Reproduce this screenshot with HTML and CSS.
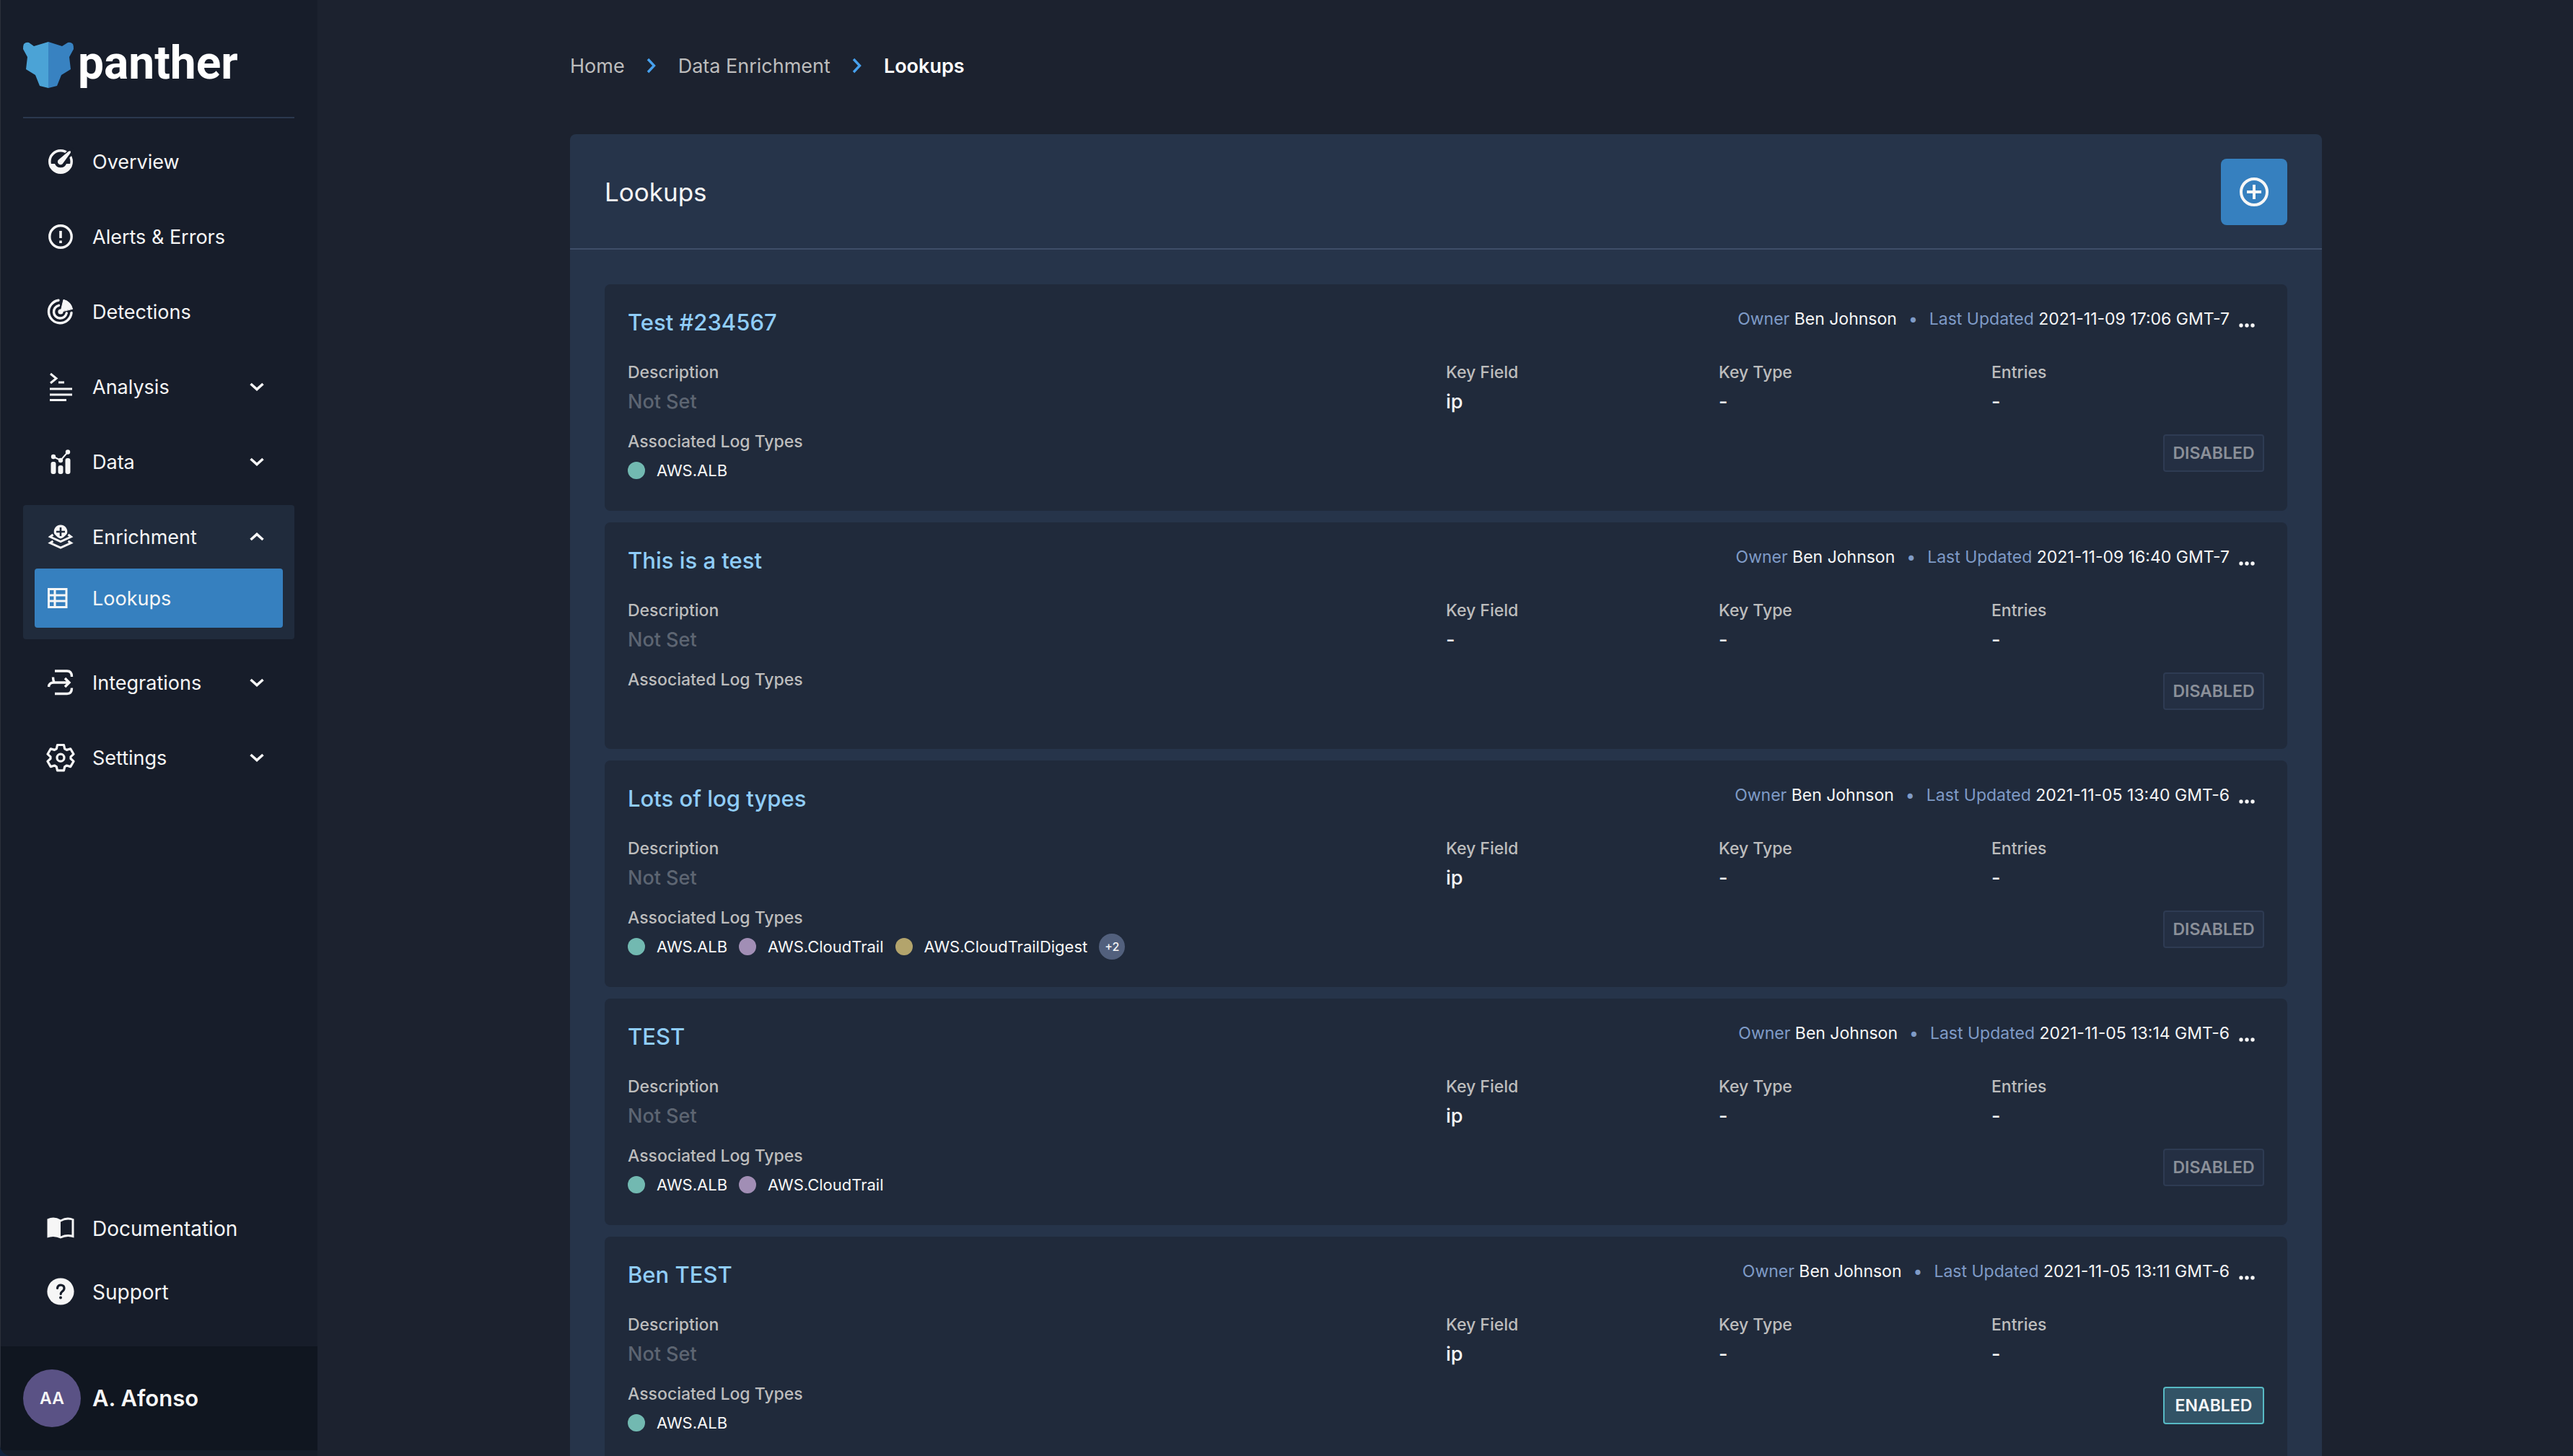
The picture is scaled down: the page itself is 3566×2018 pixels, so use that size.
FILE: index.html
```html
<!DOCTYPE html>
<html lang="en">
<head>
<meta charset="utf-8">
<title>Lookups - Panther</title>
<meta name="viewport" content="width=device-width, initial-scale=1">
<link rel="stylesheet" href="styles.css">
</head>
<body>
<svg class="defs" aria-hidden="true">
  <symbol id="chevron" viewBox="0 0 24 24"><path d="M3.5 8l8.500 7.500L20.500 8" fill="none" stroke="currentColor" stroke-width="3.600"/></symbol>
  <symbol id="crumb" viewBox="0 0 14 22"><path d="M2 2l8.500 9L2 20" fill="none" stroke="currentColor" stroke-width="3.400"/></symbol>
  <symbol id="more" viewBox="0 0 24 8"><circle cx="4" cy="4" r="2.700"/><circle cx="12" cy="4" r="2.700"/><circle cx="20" cy="4" r="2.700"/></symbol>
</svg>
<div class="app">
  <aside class="sidebar">
    <a class="logo" href="#">
      <svg class="logo-mark" viewBox="0 0 70 64" aria-hidden="true">
        <path fill="#4ba3d6" d="M35 0L15 6 8 1Q4 0 1 3 0 5 0 10L6 21 4 38 17 46 23 61 35 64z"/>
        <path fill="#3882c1" d="M35 0L54 6 62 1Q66 0 69 3 70 5 70 10L64 21 66 38 53 46 47 61 35 64z"/>
      </svg>
      <span class="logo-word">panther</span>
    </a>
    <nav class="nav" aria-label="Main">
      <a class="item" href="#">
        <svg class="icon" viewBox="0 0 40 40"><circle cx="20" cy="20" r="15.200" fill="none" stroke="currentColor" stroke-width="3.500"/><path d="M4 23h8a8.500 8 0 0 0 16 0h8A16.500 16.500 0 0 1 4 23z" fill="currentColor"/><path d="M20 20L38 3" stroke="#171d2a" stroke-width="9"/><path d="M17.600 17L31 5.800Q35 4 33.700 8L23.500 22A4 4 0 1 1 17.600 17z" fill="currentColor"/></svg>
        <span>Overview</span>
      </a>
      <a class="item" href="#">
        <svg class="icon" viewBox="0 0 40 40"><circle cx="20" cy="20" r="15.200" fill="none" stroke="currentColor" stroke-width="3.400"/><path d="M20 12v10m0 3.500v3.500" stroke="currentColor" stroke-width="3.600"/></svg>
        <span>Alerts &amp; Errors</span>
      </a>
      <a class="item" href="#">
        <svg class="icon" viewBox="0 0 40 40" fill="none" stroke="currentColor" stroke-width="3.400" stroke-linecap="round"><path d="M17 4.300A15.800 15.800 0 1 0 35 21.500M17.500 11.300A9 9 0 1 0 28.300 22"/><circle cx="20" cy="20" r="3.600" fill="currentColor" stroke="none"/><path d="M20 20L24 3.300A17 17 0 0 1 36.500 16z" fill="currentColor" stroke-width="1"/></svg>
        <span>Detections</span>
      </a>
      <button class="item" type="button">
        <svg class="icon" viewBox="0 0 40 40" fill="none" stroke="currentColor" stroke-width="3"><path d="M6 2l8 6.500L6 15M17 14h8M5 23h31M5 31h31M5 38.500h23"/></svg>
        <span>Analysis</span>
        <svg class="chev"><use href="#chevron"/></svg>
      </button>
      <button class="item" type="button">
        <svg class="icon" viewBox="0 0 40 40" fill="currentColor"><rect x="6.500" y="20" width="7" height="17" rx="3"/><rect x="16.500" y="25" width="7" height="12" rx="3"/><rect x="26.500" y="15" width="7" height="22" rx="3"/><circle cx="10" cy="13" r="3.200"/><circle cx="20" cy="18" r="3.200"/><circle cx="30" cy="6.500" r="3.200"/><path d="M10 13l10 5L30 6.500" fill="none" stroke="currentColor" stroke-width="2"/></svg>
        <span>Data</span>
        <svg class="chev"><use href="#chevron"/></svg>
      </button>
      <div class="group">
        <button class="item" type="button" aria-expanded="true">
          <svg class="icon" viewBox="0 0 40 40"><g fill="none" stroke="currentColor" stroke-width="3"><path d="M9.500 17L5.500 20 20 26.500 34.500 20 30.500 17"/><path d="M9.500 26L5.500 28.500 20 35 34.500 28.500 30.500 26"/></g><path d="M11.300 16A9.300 9.300 0 1 1 28.700 16Q24 21.500 20 22.500 16 21.500 11.300 16z" fill="currentColor"/><path d="M20 7v12m-6-6h12" stroke="#202b3c" stroke-width="2.600"/></svg>
          <span>Enrichment</span>
          <svg class="chev up"><use href="#chevron"/></svg>
        </button>
        <a class="item sub" href="#" aria-current="page">
          <svg class="icon" viewBox="0 0 40 40" fill="none" stroke="currentColor" stroke-width="3"><path d="M7.500 7.500h24.500v25H7.500zM7.500 16h24.500M7.500 24h24.500M16 7.500v25"/></svg>
          <span>Lookups</span>
        </a>
      </div>
      <button class="item" type="button">
        <svg class="icon" viewBox="0 0 40 40" fill="none" stroke="currentColor" stroke-width="3.400"><path d="M12 4h17q6.500 0 6.500 8M12 35.500h17q6.500 0 6.500-8M3.500 26q.5-6 7-6h21M26 14l6 6-6 6M9.500 12.500q0 4 1.500 7"/></svg>
        <span>Integrations</span>
        <svg class="chev"><use href="#chevron"/></svg>
      </button>
      <button class="item" type="button">
        <svg class="icon" viewBox="0 0 40 40" fill="none" stroke="currentColor" stroke-width="3.200" stroke-linejoin="round"><path d="M15.500 2.500h9l1.200 5.300 2.800 1.600 5.200-1.600 4.300 7.400-4 3.700v2.600l4 3.700-4.300 7.400-5.200-1.600-2.800 1.600-1.200 5.300h-9l-1.200-5.300-2.800-1.600-5.200 1.600L2 25.200l4-3.700v-2.600l-4-3.700 4.300-7.400 5.200 1.600 2.800-1.600z"/><circle cx="20" cy="20.200" r="5"/></svg>
        <span>Settings</span>
        <svg class="chev"><use href="#chevron"/></svg>
      </button>
    </nav>
    <nav class="help" aria-label="Help">
      <a class="item" href="#">
        <svg class="icon" viewBox="0 0 40 40" fill="currentColor"><path d="M20 8.500Q11 3 1.500 7.500v26Q11 30 20 34.500 29 30 38.500 33.500v-26Q29 3 20 8.500zM20 11.500Q27 7 35.500 9v20.500Q27 28 20 31.500z" fill-rule="evenodd"/></svg>
        <span>Documentation</span>
      </a>
      <a class="item" href="#">
        <svg class="icon" viewBox="0 0 40 40"><circle cx="20" cy="20" r="18.600" fill="currentColor"/><path d="M15.500 15.500q.5-4.500 5-4.500 4.500.5 4.500 4.500 0 2.500-2.800 4.500-2 1.500-2 3.500" fill="none" stroke="#171d2a" stroke-width="3.200" stroke-linecap="round"/><circle cx="20" cy="28.500" r="2" fill="#171d2a"/></svg>
        <span>Support</span>
      </a>
    </nav>
    <button class="user" type="button">
      <span class="avatar">AA</span>
      <span>A. Afonso</span>
    </button>
  </aside>

  <main class="main">
    <nav class="crumbs" aria-label="Breadcrumb">
      <a href="#">Home</a>
      <svg><use href="#crumb"/></svg>
      <a href="#">Data Enrichment</a>
      <svg><use href="#crumb"/></svg>
      <a href="#" aria-current="page">Lookups</a>
    </nav>

    <section class="panel">
      <header class="panel-head">
        <h1>Lookups</h1>
        <button class="add" type="button" aria-label="Add lookup">
          <svg viewBox="0 0 40 40" fill="none" stroke="currentColor" stroke-width="4"><circle cx="20" cy="20" r="18"/><path d="M20 10v20M10 20h20"/></svg>
        </button>
      </header>

      <div class="list">
        <article class="card">
          <header class="card-head">
            <h2><a href="#">Test #234567</a></h2>
            <div class="meta"><span><i>Owner</i> Ben Johnson</span><b>•</b><span><i>Last Updated</i> 2021-11-09 17:06 GMT-7</span></div>
            <button class="more" type="button" aria-label="Options"><svg><use href="#more"/></svg></button>
          </header>
          <dl class="fields">
            <div><dt>Description</dt><dd class="unset">Not Set</dd></div>
            <div><dt>Key Field</dt><dd>ip</dd></div>
            <div><dt>Key Type</dt><dd>-</dd></div>
            <div><dt>Entries</dt><dd>-</dd></div>
          </dl>
          <div class="card-foot">
            <div class="logs">
              <h3>Associated Log Types</h3>
              <ul><li class="teal">AWS.ALB</li></ul>
            </div>
            <span class="badge">DISABLED</span>
          </div>
        </article>

        <article class="card">
          <header class="card-head">
            <h2><a href="#">This is a test</a></h2>
            <div class="meta"><span><i>Owner</i> Ben Johnson</span><b>•</b><span><i>Last Updated</i> 2021-11-09 16:40 GMT-7</span></div>
            <button class="more" type="button" aria-label="Options"><svg><use href="#more"/></svg></button>
          </header>
          <dl class="fields">
            <div><dt>Description</dt><dd class="unset">Not Set</dd></div>
            <div><dt>Key Field</dt><dd>-</dd></div>
            <div><dt>Key Type</dt><dd>-</dd></div>
            <div><dt>Entries</dt><dd>-</dd></div>
          </dl>
          <div class="card-foot">
            <div class="logs">
              <h3>Associated Log Types</h3>
              <ul></ul>
            </div>
            <span class="badge">DISABLED</span>
          </div>
        </article>

        <article class="card">
          <header class="card-head">
            <h2><a href="#">Lots of log types</a></h2>
            <div class="meta"><span><i>Owner</i> Ben Johnson</span><b>•</b><span><i>Last Updated</i> 2021-11-05 13:40 GMT-6</span></div>
            <button class="more" type="button" aria-label="Options"><svg><use href="#more"/></svg></button>
          </header>
          <dl class="fields">
            <div><dt>Description</dt><dd class="unset">Not Set</dd></div>
            <div><dt>Key Field</dt><dd>ip</dd></div>
            <div><dt>Key Type</dt><dd>-</dd></div>
            <div><dt>Entries</dt><dd>-</dd></div>
          </dl>
          <div class="card-foot">
            <div class="logs">
              <h3>Associated Log Types</h3>
              <ul><li class="teal">AWS.ALB</li><li class="mauve">AWS.CloudTrail</li><li class="gold">AWS.CloudTrailDigest</li><li class="extra">+2</li></ul>
            </div>
            <span class="badge">DISABLED</span>
          </div>
        </article>

        <article class="card">
          <header class="card-head">
            <h2><a href="#">TEST</a></h2>
            <div class="meta"><span><i>Owner</i> Ben Johnson</span><b>•</b><span><i>Last Updated</i> 2021-11-05 13:14 GMT-6</span></div>
            <button class="more" type="button" aria-label="Options"><svg><use href="#more"/></svg></button>
          </header>
          <dl class="fields">
            <div><dt>Description</dt><dd class="unset">Not Set</dd></div>
            <div><dt>Key Field</dt><dd>ip</dd></div>
            <div><dt>Key Type</dt><dd>-</dd></div>
            <div><dt>Entries</dt><dd>-</dd></div>
          </dl>
          <div class="card-foot">
            <div class="logs">
              <h3>Associated Log Types</h3>
              <ul><li class="teal">AWS.ALB</li><li class="mauve">AWS.CloudTrail</li></ul>
            </div>
            <span class="badge">DISABLED</span>
          </div>
        </article>

        <article class="card">
          <header class="card-head">
            <h2><a href="#">Ben TEST</a></h2>
            <div class="meta"><span><i>Owner</i> Ben Johnson</span><b>•</b><span><i>Last Updated</i> 2021-11-05 13:11 GMT-6</span></div>
            <button class="more" type="button" aria-label="Options"><svg><use href="#more"/></svg></button>
          </header>
          <dl class="fields">
            <div><dt>Description</dt><dd class="unset">Not Set</dd></div>
            <div><dt>Key Field</dt><dd>ip</dd></div>
            <div><dt>Key Type</dt><dd>-</dd></div>
            <div><dt>Entries</dt><dd>-</dd></div>
          </dl>
          <div class="card-foot">
            <div class="logs">
              <h3>Associated Log Types</h3>
              <ul><li class="teal">AWS.ALB</li></ul>
            </div>
            <span class="badge on">ENABLED</span>
          </div>
        </article>
      </div>
    </section>
  </main>
</div>
</body>
</html>
```
FILE: styles.css
```css
* { box-sizing: border-box; margin: 0; padding: 0; }

html { background: #12233f; }
body {
  color: #f6f6f6;
  font: 400 27px/40px Inter, "Open Sans", sans-serif;
}

a { color: inherit; text-decoration: none; }
button { background: none; border: 0; color: inherit; font: inherit; cursor: pointer; }
ul { list-style: none; }
i { font-style: normal; }
svg { display: block; flex: none; }
.defs { display: none; }

.app {
  display: flex;
  height: 100vh;
  overflow: hidden;
  background: #1c222f;
  border-bottom-left-radius: 16px;
}

/* Sidebar */
.sidebar {
  display: flex;
  flex-direction: column;
  flex: none;
  width: 440px;
  padding-bottom: 8px;
  background: #171d2a;
  border-left: 1px solid #2b303b;
}
.logo {
  display: flex;
  gap: 6px;
  height: 164px;
  margin: 0 32px 0 31px;
  padding-top: 58px;
  border-bottom: 2px solid #2b384e;
}
.logo-mark { width: 70px; height: 64px; }
.logo-word { font: 700 64px/60px Roboto, sans-serif; color: #fff; }

.nav { display: flex; flex-direction: column; gap: 16px; padding: 16px 32px 0 31px; }
.help { margin-top: auto; padding: 0 32px 32px 31px; }
.item {
  display: flex;
  align-items: center;
  gap: 24px;
  width: 100%;
  height: 88px;
  padding: 0 40px 0 32px;
  text-align: left;
}
.item span { padding-top: 2px; }
.icon { width: 40px; height: 40px; }
.chev { width: 24px; height: 24px; margin-left: auto; }
.up { transform: scaleY(-1); }
.group { padding-bottom: 16px; background: #202b3c; border-radius: 4px; }
.sub {
  width: auto;
  height: 82px;
  margin: 0 16px;
  padding: 0 16px 0 12px;
  gap: 28px;
  background: #3680bf;
  border-radius: 4px;
}
.help .item { font-size: 28px; }
.user {
  display: flex;
  align-items: center;
  gap: 16px;
  padding: 32px 31px;
  background: #101620;
  font-size: 31px;
  font-weight: 600;
  text-align: left;
}
.avatar {
  width: 80px;
  border-radius: 50%;
  background: #5a5285;
  font-size: 23px;
  line-height: 80px;
  text-align: center;
}

/* Main column */
.main { flex: 1; min-width: 0; padding: 70px 348px 0 350px; }
.crumbs { display: flex; align-items: center; gap: 30px; margin-bottom: 74px; color: #bdbdbd; }
.crumbs a { padding-top: 2px; }
.crumbs svg { width: 14px; height: 22px; color: #47a1ee; }
.crumbs [aria-current] { color: #fff; font-weight: 600; }

.panel { background: #26344a; border-radius: 8px; }
.panel-head {
  display: flex;
  align-items: center;
  justify-content: space-between;
  padding: 34px 48px 32px;
  border-bottom: 2px solid #3f4e68;
}
.panel-head h1 { font-size: 35px; font-weight: 400; }
.add {
  display: grid;
  place-items: center;
  width: 92px;
  height: 92px;
  border-radius: 8px;
  background: #3680bf;
}
.add svg { width: 40px; height: 40px; }

.list { display: grid; gap: 16px; padding: 48px; }
.card { height: 314px; padding: 32px; background: #202a3b; border-radius: 8px; }
.card-head { display: flex; height: 70px; font-size: 23px; line-height: 32px; }
.card-head h2 { margin-right: auto; font-size: 31px; font-weight: 500; line-height: 42px; color: #90cdf9; }
.meta { display: flex; gap: 16px; }
.meta i, .meta b { color: #7f9bc7; font-weight: 400; }
.more { display: flex; align-items: center; height: 50px; padding-left: 12px; margin-right: 12px; }
.more svg { width: 24px; height: 8px; fill: #f6f6f6; }

.fields { display: grid; grid-template-columns: 3fr 1fr 1fr 1fr; }
.fields dt, .logs h3 { color: #bdbdbd; font-size: 23px; font-weight: 500; line-height: 40px; }
.fields dd { font-weight: 500; line-height: 42px; }
.fields .unset { color: #5d6572; }

.card-foot { display: flex; justify-content: space-between; padding-top: 14px; }
.logs ul { display: flex; align-items: center; gap: 16px; height: 40px; font-size: 22px; }
.logs li { display: flex; align-items: center; gap: 16px; }
.logs li::before { content: ""; width: 24px; height: 24px; border-radius: 50%; background: currentColor; }
.logs .teal::before { background: #72b9b1; }
.logs .mauve::before { background: #a18eb5; }
.logs .gold::before { background: #b3a46c; }
.logs .extra { justify-content: center; width: 36px; height: 36px; border-radius: 50%; background: #52607d; font-size: 16px; font-weight: 500; }
.logs .extra::before { content: none; }
.badge {
  width: 140px;
  height: 52px;
  margin-top: 10px;
  border: 2px solid #2e3b53;
  border-radius: 4px;
  background: #242f43;
  color: #8b9099;
  font-size: 23px;
  font-weight: 600;
  line-height: 48px;
  text-align: center;
}
.on { border-color: #57b9c4; background: #325366; color: #f6f6f6; }
```
